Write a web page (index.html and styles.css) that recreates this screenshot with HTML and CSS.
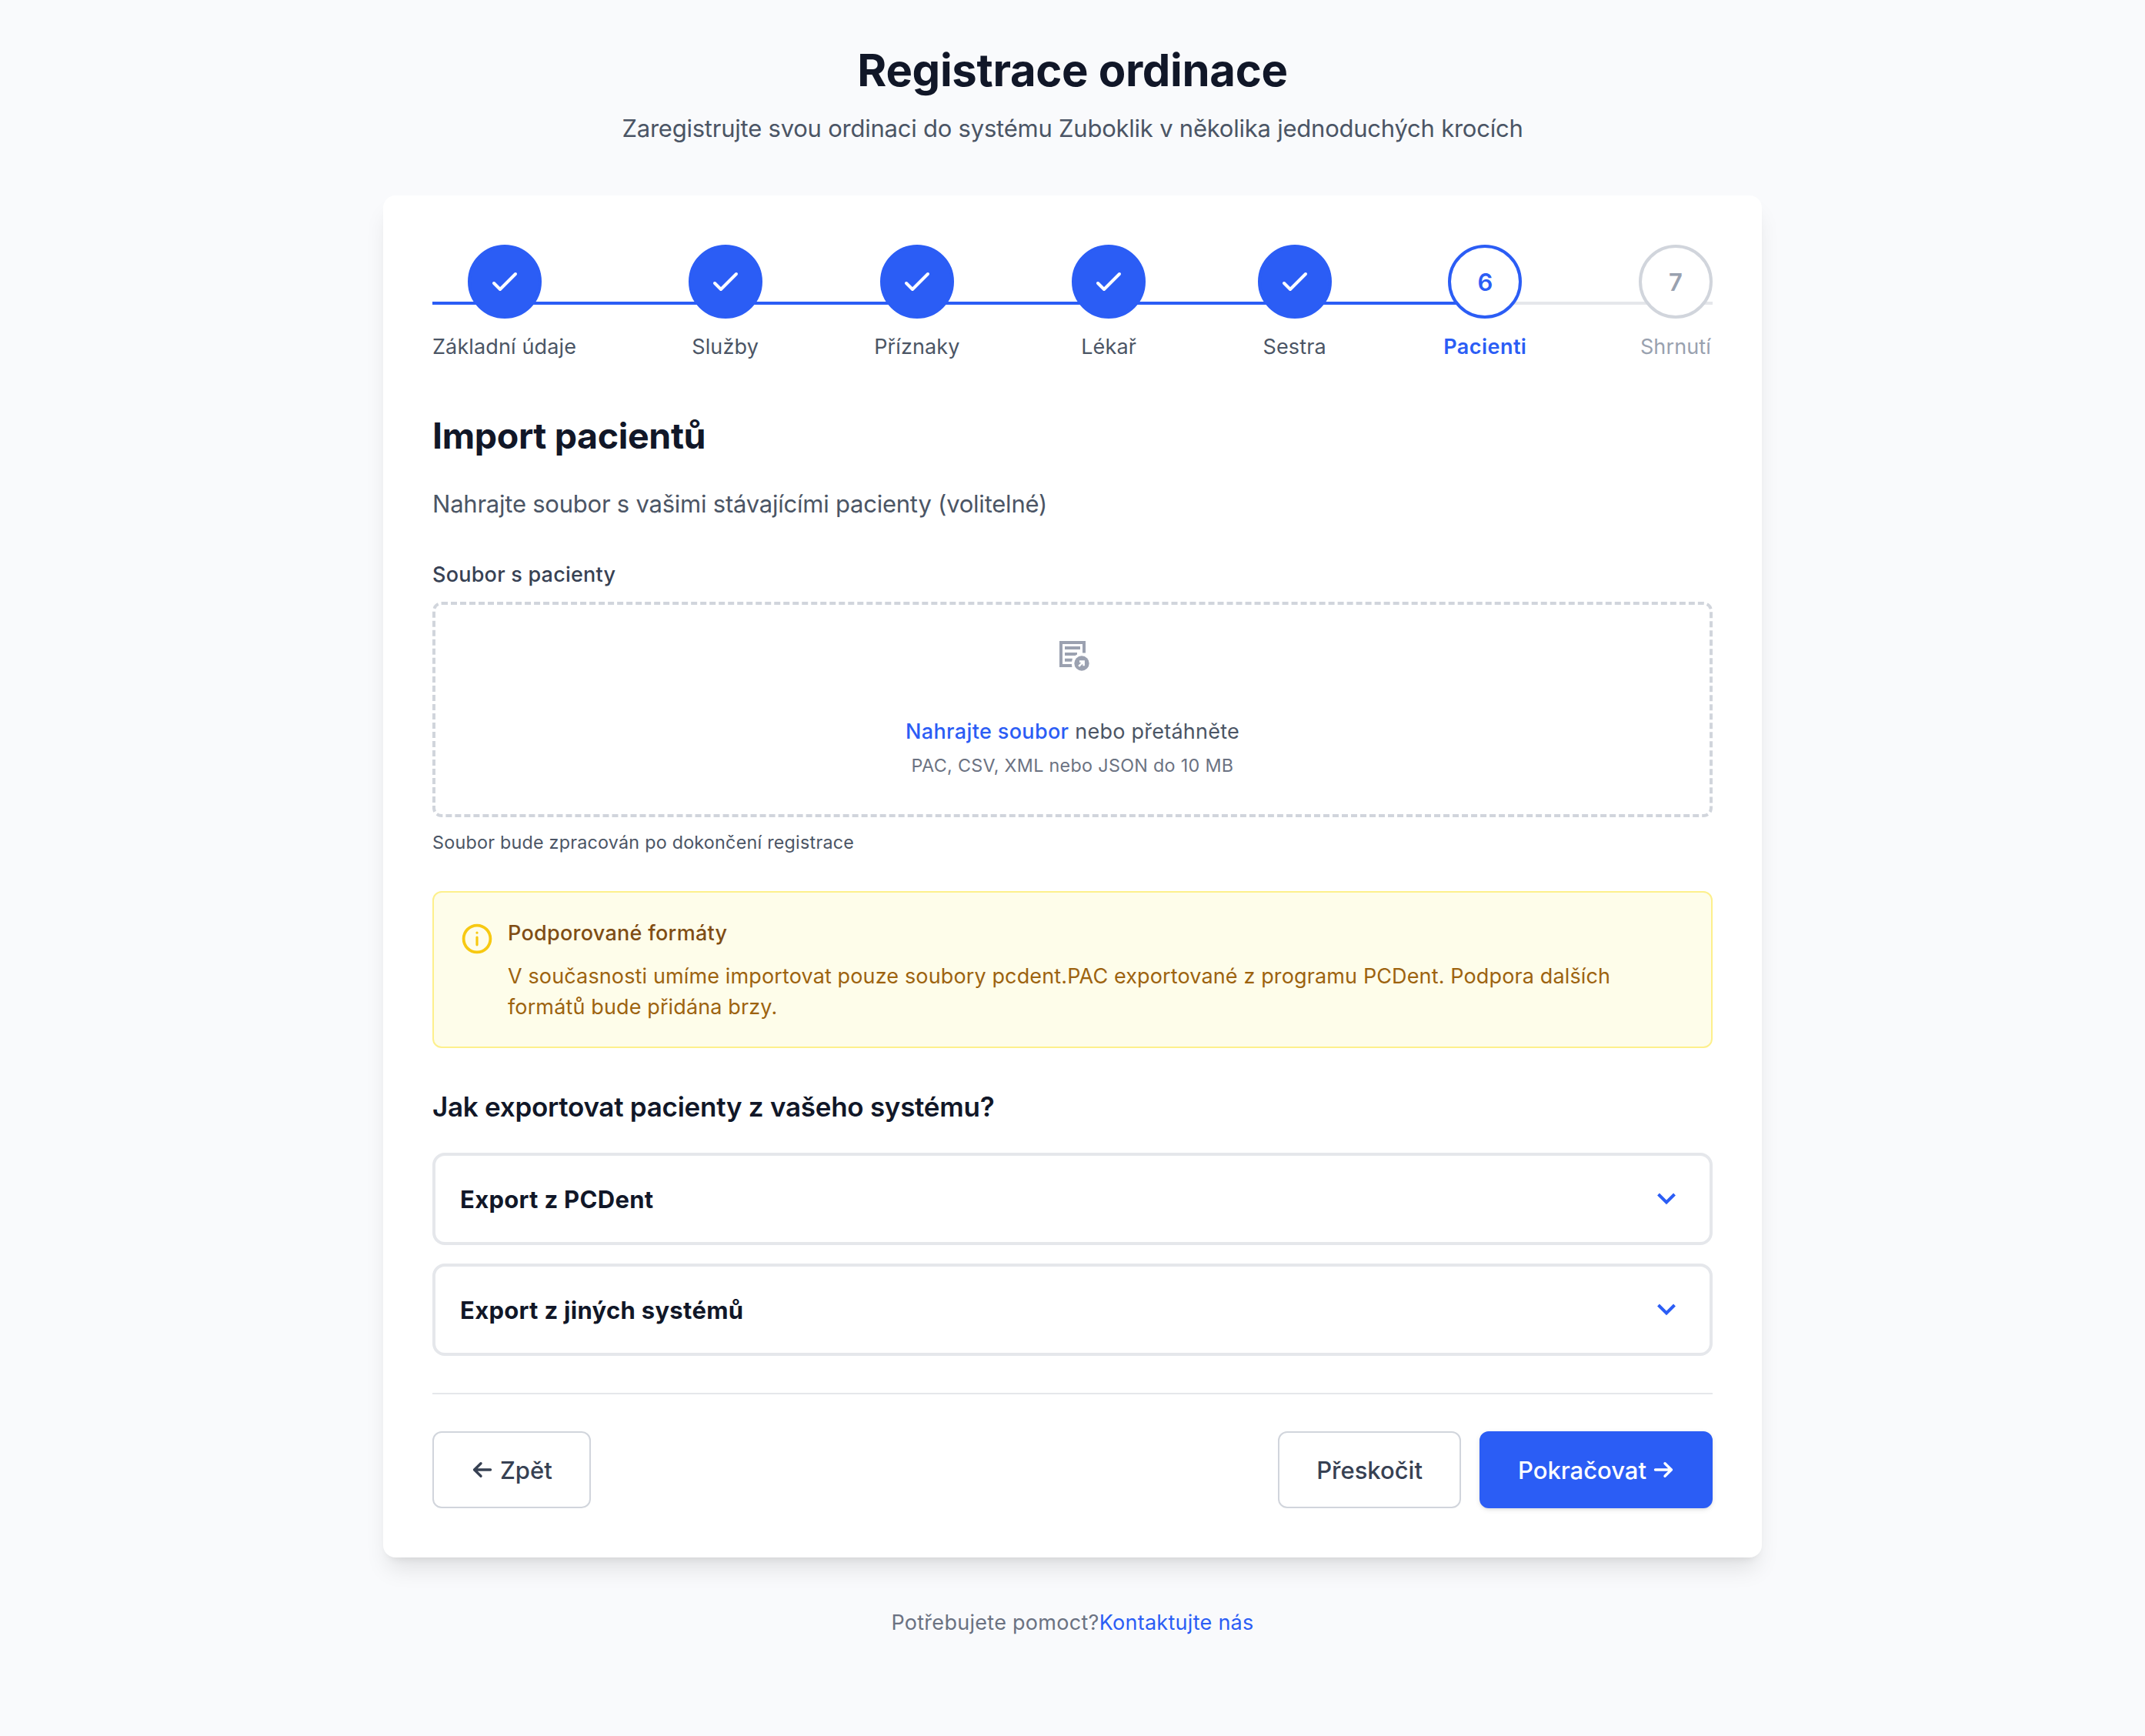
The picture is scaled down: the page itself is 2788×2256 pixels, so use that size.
FILE: index.html
```html
<!DOCTYPE html>
<html lang="cs">
<head>
  <meta charset="UTF-8">
  <meta name="viewport" content="width=device-width, initial-scale=1.0">
  <title>Registrace ordinace</title>
  <link rel="stylesheet" href="styles.css">
</head>
<body>
  <header class="page-header">
    <h1>Registrace ordinace</h1>
    <p>Zaregistrujte svou ordinaci do systému Zuboklik v několika jednoduchých krocích</p>
  </header>

  <main class="card">
    <ol class="steps">
      <li class="step done">
        <span class="circle"><svg viewBox="0 0 24 24"><path d="M5 13l4 4L19 7"/></svg></span>
        <span class="step-label">Základní údaje</span>
      </li>
      <li class="step done">
        <span class="circle"><svg viewBox="0 0 24 24"><path d="M5 13l4 4L19 7"/></svg></span>
        <span class="step-label">Služby</span>
      </li>
      <li class="step done">
        <span class="circle"><svg viewBox="0 0 24 24"><path d="M5 13l4 4L19 7"/></svg></span>
        <span class="step-label">Příznaky</span>
      </li>
      <li class="step done">
        <span class="circle"><svg viewBox="0 0 24 24"><path d="M5 13l4 4L19 7"/></svg></span>
        <span class="step-label">Lékař</span>
      </li>
      <li class="step done">
        <span class="circle"><svg viewBox="0 0 24 24"><path d="M5 13l4 4L19 7"/></svg></span>
        <span class="step-label">Sestra</span>
      </li>
      <li class="step active">
        <span class="circle">6</span>
        <span class="step-label">Pacienti</span>
      </li>
      <li class="step">
        <span class="circle">7</span>
        <span class="step-label">Shrnutí</span>
      </li>
    </ol>

    <h2>Import pacientů</h2>
    <p class="intro">Nahrajte soubor s vašimi stávajícími pacienty (volitelné)</p>

    <label class="field-label" for="file">Soubor s pacienty</label>
    <div class="dropzone">
      <svg class="file-icon" viewBox="0 0 48 48">
        <path class="sheet" d="M39 22.5V9H9v30h14.5M14 16h20M14 24h16M14 31.8h9.8"/>
        <circle class="gap" cx="36" cy="36" r="13"/>
        <circle class="dot" cx="36" cy="36" r="9.7"/>
        <path class="arrow" d="M33 33.6h5.6v5.6M32.2 39.8l6-6"/>
      </svg>
      <p class="drop-text"><span class="upload-link">Nahrajte soubor</span> nebo přetáhněte</p>
      <p class="drop-formats">PAC, CSV, XML nebo JSON do 10 MB</p>
      <input type="file" id="file" hidden>
    </div>
    <p class="hint">Soubor bude zpracován po dokončení registrace</p>

    <div class="notice">
      <svg viewBox="0 0 48 48">
        <circle cx="24" cy="24" r="17.4"/>
        <path d="M24 22v9.8M24 16.1v.1"/>
      </svg>
      <div>
        <h4>Podporované formáty</h4>
        <p>V současnosti umíme importovat pouze soubory pcdent.PAC exportované z programu PCDent. Podpora dalších<br>formátů bude přidána brzy.</p>
      </div>
    </div>

    <h3>Jak exportovat pacienty z vašeho systému?</h3>
    <div class="accordion">
      <button type="button" class="accordion-item">
        <span>Export z PCDent</span>
        <svg viewBox="0 0 48 48"><path d="M13.5 18L24 28.5 34.5 18"/></svg>
      </button>
      <button type="button" class="accordion-item">
        <span>Export z jiných systémů</span>
        <svg viewBox="0 0 48 48"><path d="M13.5 18L24 28.5 34.5 18"/></svg>
      </button>
    </div>

    <div class="actions">
      <button type="button" class="btn back">
        <svg viewBox="0 0 28 28"><path d="M25.5 14h-21M13 5.8L4.6 14l8.4 8.2"/></svg>
        Zpět
      </button>
      <div class="actions-right">
        <button type="button" class="btn">Přeskočit</button>
        <button type="button" class="btn primary">
          Pokračovat
          <svg viewBox="0 0 28 28"><path d="M3.5 14h21M16 5.8l8.4 8.2-8.4 8.2"/></svg>
        </button>
      </div>
    </div>
  </main>

  <footer>Potřebujete pomoct?<a href="#">Kontaktujte nás</a></footer>
</body>
</html>
```
FILE: styles.css
```css
* {
  box-sizing: border-box;
}
body {
  margin: 0;
  padding: 55px 0 0;
  min-height: 2256px;
  background-color: #f9fafc;
  color: #111728;
  font-family: Inter, 'Liberation Sans', sans-serif;
}
h1, h2, h3, h4, p, ol {
  margin: 0;
  padding: 0;
}
button {
  font-family: inherit;
  cursor: pointer;
}
svg {
  display: block;
  fill: none;
  stroke: currentColor;
  flex-shrink: 0;
}

.page-header {
  text-align: center;
}
.page-header h1 {
  font-size: 58px;
  line-height: 72px;
  font-weight: 700;
  letter-spacing: -0.32px;
}
.page-header p {
  margin-top: 16px;
  font-size: 31px;
  line-height: 48px;
  letter-spacing: -0.23px;
  color: #4b5565;
}

.card {
  width: 1792px;
  margin: 63px auto 0;
  padding: 64px;
  background-color: #fff;
  border-radius: 16px;
  box-shadow: 0 20px 30px -6px rgba(0, 0, 0, 0.1), 0 8px 12px -8px rgba(0, 0, 0, 0.1);
}

/* kroky */
.steps {
  position: relative;
  display: flex;
  justify-content: space-between;
  list-style: none;
}
.steps::before,
.steps::after {
  content: "";
  position: absolute;
  top: 74px;
  left: 0;
  width: 100%;
  height: 4px;
  background-color: #e5e7eb;
}
.steps::after {
  width: 83.33%;
  background-color: #2b5df5;
}
.step {
  position: relative;
  z-index: 1;
  display: flex;
  flex-direction: column;
  align-items: center;
  color: #99a1af;
}
.circle {
  display: flex;
  align-items: center;
  justify-content: center;
  width: 96px;
  height: 96px;
  border: 4px solid #d1d5dc;
  border-radius: 50%;
  background-color: #fff;
  font-size: 31px;
  font-weight: 600;
}
.circle svg {
  width: 48px;
  height: 48px;
  stroke-width: 2;
  stroke-linecap: round;
  stroke-linejoin: round;
}
.step-label {
  margin-top: 17px;
  font-size: 27px;
  line-height: 40px;
  letter-spacing: 0.13px;
}
.step.done .circle {
  border-color: #2b5df5;
  background-color: #2b5df5;
  color: #fff;
}
.step.done {
  color: #4b5565;
}
.step.active {
  color: #2b5df5;
}
.step.active .circle {
  border-color: #2b5df5;
}
.step.active .step-label {
  font-weight: 600;
  letter-spacing: 0.45px;
}

h2 {
  margin-top: 63px;
  font-size: 46.5px;
  line-height: 64px;
  font-weight: 700;
  letter-spacing: -0.36px;
}
.intro {
  margin-top: 33px;
  font-size: 31px;
  line-height: 48px;
  letter-spacing: -0.23px;
  color: #4b5565;
}
.field-label {
  display: block;
  margin-top: 48px;
  font-size: 27px;
  line-height: 40px;
  font-weight: 500;
  letter-spacing: 0.23px;
  color: #374153;
}

/* nahrání souboru */
.dropzone {
  display: flex;
  flex-direction: column;
  align-items: center;
  height: 280px;
  margin-top: 15px;
  padding-top: 40px;
  border: 4px dashed #d1d5dc;
  border-radius: 12px;
}
.file-icon {
  width: 48px;
  height: 48px;
  margin-bottom: 57px;
  color: #9ba1b0;
}
.file-icon .sheet {
  stroke-width: 4;
}
.file-icon .gap {
  fill: #fff;
  stroke: none;
}
.file-icon .dot {
  fill: currentColor;
  stroke: none;
}
.file-icon .arrow {
  stroke: #fff;
  stroke-width: 2.6;
}
.drop-text {
  font-size: 27px;
  line-height: 40px;
  letter-spacing: 0.24px;
  color: #4b5565;
}
.upload-link {
  color: #2b5df5;
  font-weight: 500;
  letter-spacing: 0.36px;
}
.drop-formats {
  margin-top: 8px;
  font-size: 23.3px;
  line-height: 32px;
  letter-spacing: 0.32px;
  color: #6b7282;
}
.hint {
  margin-top: 17px;
  font-size: 23.3px;
  line-height: 32px;
  letter-spacing: 0.24px;
  color: #4b5565;
}

.notice {
  display: flex;
  gap: 16px;
  margin-top: 47px;
  padding: 33px 32px 31px;
  border: 2px solid #fdf08c;
  border-radius: 12px;
  background-color: #fefdea;
  color: #9d630f;
}
.notice svg {
  width: 48px;
  height: 48px;
  margin-top: 3px;
  color: #f7c912;
  stroke-width: 3.8;
  stroke-linecap: round;
}
.notice path {
  stroke-width: 3.2;
}
.notice h4 {
  font-size: 27px;
  line-height: 40px;
  font-weight: 500;
  letter-spacing: 0.28px;
  color: #804d14;
}
.notice p {
  margin-top: 16px;
  font-size: 27px;
  line-height: 40px;
  letter-spacing: 0.13px;
}

h3 {
  margin-top: 48px;
  font-size: 35px;
  line-height: 56px;
  font-weight: 600;
  letter-spacing: -0.27px;
}
.accordion {
  display: flex;
  flex-direction: column;
  gap: 24px;
  margin-top: 32px;
}
.accordion-item {
  display: flex;
  justify-content: space-between;
  align-items: center;
  height: 120px;
  padding: 0 32px;
  border: 4px solid #e5e7eb;
  border-radius: 16px;
  background-color: #fff;
  color: #111728;
  font-size: 31px;
  font-weight: 700;
  letter-spacing: 0.3px;
}
.accordion-item svg {
  width: 48px;
  height: 48px;
  color: #2b5df5;
  stroke-width: 4;
}

/* tlačítka */
.actions {
  display: flex;
  justify-content: space-between;
  margin-top: 48px;
  padding-top: 48px;
  border-top: 2px solid #e5e7eb;
}
.actions-right {
  display: flex;
  gap: 24px;
}
.btn {
  display: flex;
  align-items: center;
  gap: 8px;
  height: 100px;
  padding: 0 48px;
  border: 2px solid #d1d5dc;
  border-radius: 12px;
  background-color: #fff;
  color: #374153;
  font-size: 31px;
  font-weight: 500;
}
.btn.back {
  gap: 10px;
}
.btn svg {
  width: 28px;
  height: 28px;
  stroke-width: 3.4;
  stroke-linecap: round;
  stroke-linejoin: round;
}
.btn.primary {
  border-color: #2b5df5;
  background-color: #2b5df5;
  color: #fff;
  box-shadow: 0 2px 6px rgba(0, 0, 0, 0.1), 0 2px 4px -2px rgba(0, 0, 0, 0.1);
}

footer {
  margin-top: 65px;
  text-align: center;
  font-size: 27px;
  line-height: 40px;
  letter-spacing: 0.28px;
  color: #6b7282;
}
footer a {
  color: #2b5df5;
  text-decoration: none;
}
```
